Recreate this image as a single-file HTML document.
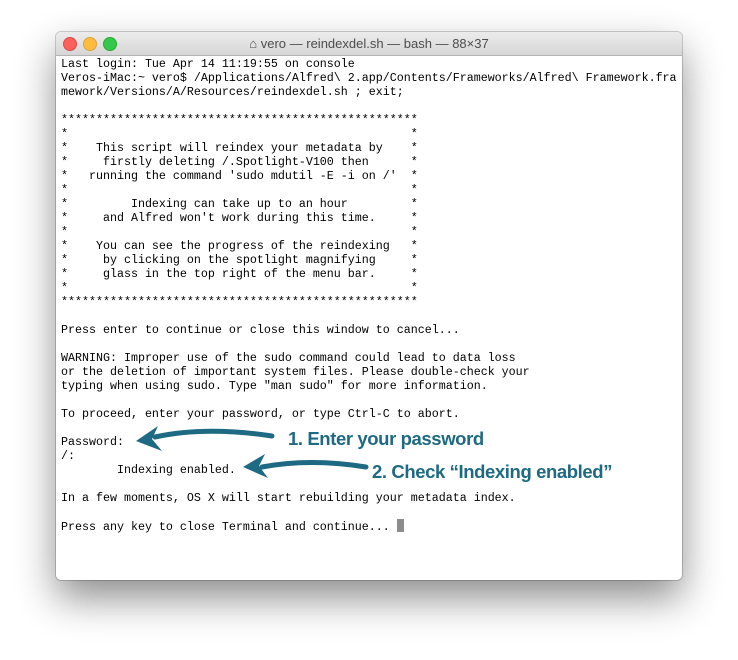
<!DOCTYPE html>
<html><head><style>
body{margin:0;width:738px;height:660px;background:#fff;position:relative;overflow:hidden}
.win{position:absolute;left:56px;top:32px;width:626px;height:548px;background:#fff;border-radius:5px;box-shadow:0 18px 40px rgba(0,0,0,.45),0 0 0 1px rgba(0,0,0,.18);overflow:hidden}
.tb{height:23px;background:linear-gradient(#ececec,#d6d6d6);border-bottom:1px solid #b4b4b4;position:relative}
.dot{position:absolute;top:5px;width:12px;height:12px;border-radius:50%}
.tt{position:absolute;left:0;right:0;top:4px;text-align:center;font:13px "Liberation Sans",sans-serif;color:#4d4d4d}
pre{position:absolute;left:5px;top:25px;margin:0;font:11.67px/14px "Liberation Mono",monospace;color:#000}
.cur{display:inline-block;width:7px;height:13px;background:#8c8c8c;vertical-align:-2px}
.ann{position:absolute;font:bold 18.5px "Liberation Sans",sans-serif;color:#1d6a82;letter-spacing:-0.4px;white-space:nowrap}
</style></head><body>
<div class="win">
<div class="tb">
<div class="dot" style="left:7px;background:#fc605c;border:0.5px solid #de4a45"></div>
<div class="dot" style="left:27px;background:#fdbc40;border:0.5px solid #dea236"></div>
<div class="dot" style="left:47px;background:#34c84a;border:0.5px solid #27aa35"></div>
<div class="tt">⌂ vero — reindexdel.sh — bash — 88×37</div>
</div>
<pre>Last login: Tue Apr 14 11:19:55 on console
Veros-iMac:~ vero$ /Applications/Alfred\ 2.app/Contents/Frameworks/Alfred\ Framework.fra
mework/Versions/A/Resources/reindexdel.sh ; exit;

***************************************************
*                                                 *
*    This script will reindex your metadata by    *
*     firstly deleting /.Spotlight-V100 then      *
*   running the command 'sudo mdutil -E -i on /'  *
*                                                 *
*         Indexing can take up to an hour         *
*     and Alfred won't work during this time.     *
*                                                 *
*    You can see the progress of the reindexing   *
*     by clicking on the spotlight magnifying     *
*     glass in the top right of the menu bar.     *
*                                                 *
***************************************************

Press enter to continue or close this window to cancel...

WARNING: Improper use of the sudo command could lead to data loss
or the deletion of important system files. Please double-check your
typing when using sudo. Type "man sudo" for more information.

To proceed, enter your password, or type Ctrl-C to abort.

Password:
/:
        Indexing enabled.

In a few moments, OS X will start rebuilding your metadata index.

Press any key to close Terminal and continue... <span class="cur"></span></pre>
</div>
<svg style="position:absolute;left:0;top:0" width="738" height="660">
<path d="M155 437 Q205 426 272 436" stroke="#1d6a82" stroke-width="5" fill="none" stroke-linecap="round"/>
<path d="M136 441 L158 426 L152 439 L162 451 Z" fill="#1d6a82"/>
<path d="M262 467 Q310 458 366 467" stroke="#1d6a82" stroke-width="5" fill="none" stroke-linecap="round"/>
<path d="M243 467 L265 454 L259 466 L268 478 Z" fill="#1d6a82"/>
</svg>
<div class="ann" style="left:288px;top:428px">1. Enter your password</div>
<div class="ann" style="left:372px;top:461px">2. Check “Indexing enabled”</div>
</body></html>
